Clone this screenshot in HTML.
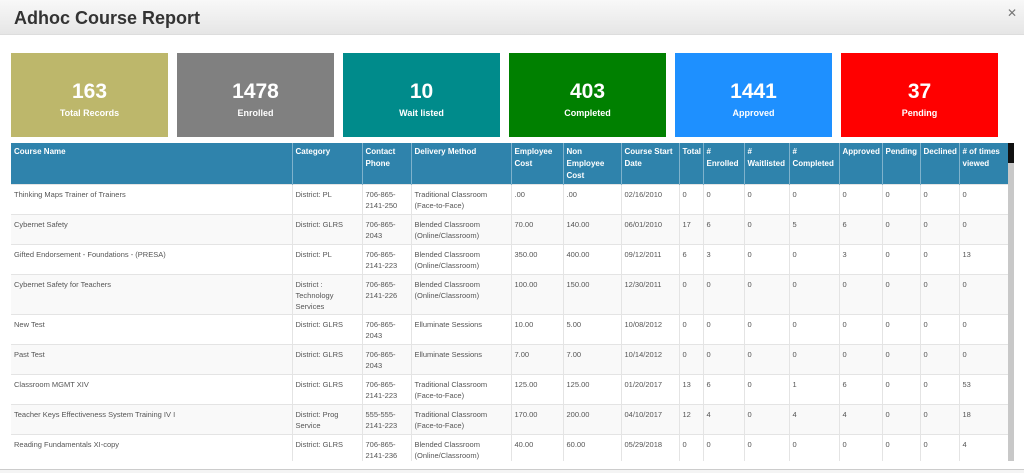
<!DOCTYPE html>
<html><head><meta charset="utf-8"><style>
*{margin:0;padding:0;box-sizing:border-box}
body{width:1024px;height:473px;overflow:hidden;background:#fff;font-family:"Liberation Sans",Arial,sans-serif;position:relative}
.top{position:absolute;left:0;top:0;width:1024px;height:35px;background:linear-gradient(#f8f8f8,#e6e6e6);border-bottom:1px solid #ddd}
.top h1{position:absolute;left:14px;top:8px;font-size:18px;font-weight:bold;color:#333}
.x{position:absolute;left:1007px;top:6px;font-size:12px;color:#777}
.card{position:absolute;top:53px;width:157px;height:84px;color:#fff;text-align:center}
.card b{display:block;font-size:21px;margin-top:27px;line-height:24px}
.card span{display:block;font-size:9px;font-weight:bold;margin-top:4px}
.wrap{position:absolute;left:11px;top:143px;width:997px;height:318px;overflow:hidden}
table{border-collapse:collapse;table-layout:fixed;width:997px;font-size:7.5px;color:#555}
th{background:#2f83ac;color:#fff;text-align:left;vertical-align:top;font-weight:bold;height:41px;padding:3px 3px 0;line-height:12px;border-right:1px solid #7fb2cc;font-size:8px}
td{vertical-align:top;padding:4px 3px 0;line-height:11px;border-right:1px solid #e4e4e4;border-top:1px solid #e4e4e4;height:30px}
tr:nth-child(odd) td{background:#f9f9f9}
.sb{position:absolute;left:1008px;top:143px;width:6px;height:318px;background:#c8c8c8}
.sb i{position:absolute;left:0;top:0;width:6px;height:20px;background:#111}
.bot{position:absolute;left:0;top:469px;width:1024px;height:4px;border-top:1px solid #ccc;background:#f4f4f4}
</style></head><body>
<div class="top"><h1>Adhoc Course Report</h1><div class="x">✕</div></div>
<div class="card" style="left:11px;background:#bdb76b"><b>163</b><span>Total Records</span></div>
<div class="card" style="left:177px;background:#808080"><b>1478</b><span>Enrolled</span></div>
<div class="card" style="left:343px;background:#008b8b"><b>10</b><span>Wait listed</span></div>
<div class="card" style="left:509px;background:#008000"><b>403</b><span>Completed</span></div>
<div class="card" style="left:675px;background:#1e90ff"><b>1441</b><span>Approved</span></div>
<div class="card" style="left:841px;background:#ff0000"><b>37</b><span>Pending</span></div>
<div class="wrap"><table>
<colgroup><col style="width:281px"><col style="width:70px"><col style="width:49px"><col style="width:100px"><col style="width:52px"><col style="width:58px"><col style="width:58px"><col style="width:24px"><col style="width:41px"><col style="width:45px"><col style="width:50px"><col style="width:43px"><col style="width:38px"><col style="width:39px"><col style="width:49px"></colgroup>
<tr><th>Course Name</th><th>Category</th><th>Contact Phone</th><th>Delivery Method</th><th>Employee Cost</th><th>Non Employee Cost</th><th>Course Start Date</th><th>Total</th><th># Enrolled</th><th># Waitlisted</th><th># Completed</th><th>Approved</th><th>Pending</th><th>Declined</th><th># of times viewed</th></tr>
<tr><td>Thinking Maps Trainer of Trainers</td><td>District: PL</td><td>706-865-2141-250</td><td>Traditional Classroom (Face-to-Face)</td><td>.00</td><td>.00</td><td>02/16/2010</td><td>0</td><td>0</td><td>0</td><td>0</td><td>0</td><td>0</td><td>0</td><td>0</td></tr>
<tr><td>Cybernet Safety</td><td>District: GLRS</td><td>706-865-2043</td><td>Blended Classroom (Online/Classroom)</td><td>70.00</td><td>140.00</td><td>06/01/2010</td><td>17</td><td>6</td><td>0</td><td>5</td><td>6</td><td>0</td><td>0</td><td>0</td></tr>
<tr><td>Gifted Endorsement - Foundations - (PRESA)</td><td>District: PL</td><td>706-865-2141-223</td><td>Blended Classroom (Online/Classroom)</td><td>350.00</td><td>400.00</td><td>09/12/2011</td><td>6</td><td>3</td><td>0</td><td>0</td><td>3</td><td>0</td><td>0</td><td>13</td></tr>
<tr><td style="height:40px">Cybernet Safety for Teachers</td><td>District : Technology Services</td><td>706-865-2141-226</td><td>Blended Classroom (Online/Classroom)</td><td>100.00</td><td>150.00</td><td>12/30/2011</td><td>0</td><td>0</td><td>0</td><td>0</td><td>0</td><td>0</td><td>0</td><td>0</td></tr>
<tr><td>New Test</td><td>District: GLRS</td><td>706-865-2043</td><td>Elluminate Sessions</td><td>10.00</td><td>5.00</td><td>10/08/2012</td><td>0</td><td>0</td><td>0</td><td>0</td><td>0</td><td>0</td><td>0</td><td>0</td></tr>
<tr><td>Past Test</td><td>District: GLRS</td><td>706-865-2043</td><td>Elluminate Sessions</td><td>7.00</td><td>7.00</td><td>10/14/2012</td><td>0</td><td>0</td><td>0</td><td>0</td><td>0</td><td>0</td><td>0</td><td>0</td></tr>
<tr><td>Classroom MGMT XIV</td><td>District: GLRS</td><td>706-865-2141-223</td><td>Traditional Classroom (Face-to-Face)</td><td>125.00</td><td>125.00</td><td>01/20/2017</td><td>13</td><td>6</td><td>0</td><td>1</td><td>6</td><td>0</td><td>0</td><td>53</td></tr>
<tr><td>Teacher Keys Effectiveness System Training IV I</td><td>District: Prog Service</td><td>555-555-2141-223</td><td>Traditional Classroom (Face-to-Face)</td><td>170.00</td><td>200.00</td><td>04/10/2017</td><td>12</td><td>4</td><td>0</td><td>4</td><td>4</td><td>0</td><td>0</td><td>18</td></tr>
<tr><td>Reading Fundamentals XI-copy</td><td>District: GLRS</td><td>706-865-2141-236</td><td>Blended Classroom (Online/Classroom)</td><td>40.00</td><td>60.00</td><td>05/29/2018</td><td>0</td><td>0</td><td>0</td><td>0</td><td>0</td><td>0</td><td>0</td><td>4</td></tr>
</table></div>
<div class="sb"><i></i></div>
<div class="bot"></div>
</body></html>
